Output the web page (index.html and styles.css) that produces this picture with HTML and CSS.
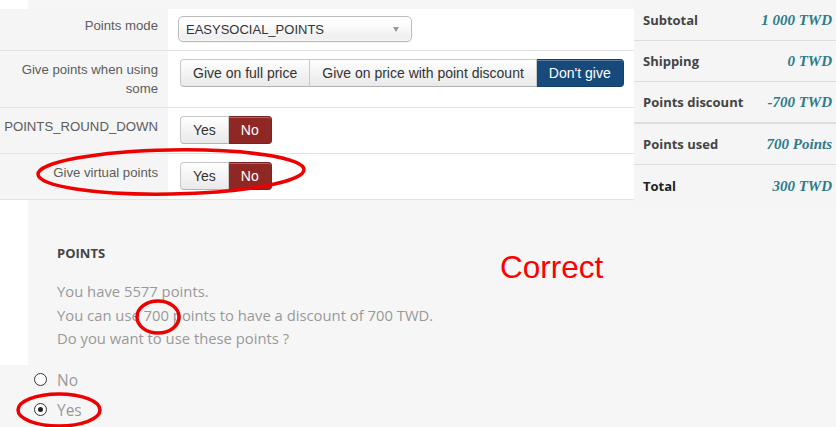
FILE: index.html
```
<!DOCTYPE html>
<html>
<head>
<meta charset="utf-8">
<link rel="stylesheet" href="styles.css">
</head>
<body>
<div class="page">
  <div class="upper">
    <div class="left">
      <div class="band"><div class="white-corner"></div></div>
      <div class="form">
        <div class="frow first">
          <div class="flabel">Points mode</div>
          <div class="fctrl">
            <div class="select"><span>EASYSOCIAL_POINTS</span><i class="caret"></i></div>
          </div>
        </div>
        <div class="frow">
          <div class="flabel">Give points when using some</div>
          <div class="fctrl">
            <div class="btn-group">
              <span class="btn">Give on full price</span>
              <span class="btn">Give on price with point discount</span>
              <span class="btn primary">Don't give</span>
            </div>
          </div>
        </div>
        <div class="frow">
          <div class="flabel">POINTS_ROUND_DOWN</div>
          <div class="fctrl">
            <div class="btn-group">
              <span class="btn">Yes</span>
              <span class="btn danger">No</span>
            </div>
          </div>
        </div>
        <div class="frow">
          <div class="flabel">Give virtual points</div>
          <div class="fctrl">
            <div class="btn-group">
              <span class="btn">Yes</span>
              <span class="btn danger">No</span>
            </div>
          </div>
        </div>
      </div>
      <div class="band fill"><div class="white-corner"></div></div>
    </div>
    <div class="summary">
      <div class="srow"><span class="slabel">Subtotal</span><span class="sval">1 000 TWD</span></div>
      <div class="srow"><span class="slabel">Shipping</span><span class="sval">0 TWD</span></div>
      <div class="srow thick"><span class="slabel">Points discount</span><span class="sval">-700 TWD</span></div>
      <div class="srow"><span class="slabel">Points used</span><span class="sval">700 Points</span></div>
      <div class="srow last"><span class="slabel total">Total</span><span class="sval">300 TWD</span></div>
    </div>
  </div>
  <div class="lower">
    <div class="lower-main">
      <div class="strip"></div>
      <div class="points">
        <h3 class="points-title">POINTS</h3>
        <p class="points-text">You have 5577 points.<br>You can use 700 points to have a discount of 700 TWD.<br>Do you want to use these points ?</p>
      </div>
    </div>
    <div class="choices">
      <label class="radio"><span class="circle"></span>No</label>
      <label class="radio"><span class="circle checked"></span>Yes</label>
    </div>
  </div>
  <div class="note">Correct</div>
  <svg class="marks" width="836" height="427" viewBox="0 0 836 427">
    <ellipse cx="171" cy="172" rx="133" ry="22" transform="rotate(-1 171 172)"/>
    <ellipse cx="158" cy="317" rx="21" ry="16"/>
    <ellipse cx="59" cy="410" rx="41" ry="16"/>
  </svg>
</div>
</body>
</html>
```
FILE: styles.css
```
html, body {
  margin: 0;
  padding: 0;
}
body {
  background: #f6f6f6;
  width: 836px;
  height: 427px;
  overflow: hidden;
}
.page {
  position: relative;
  width: 836px;
  height: 427px;
  display: flex;
  flex-direction: column;
}
.upper {
  display: flex;
}
.left {
  width: 634px;
  display: flex;
  flex-direction: column;
}
.band {
  height: 9px;
  display: flex;
}
.band.fill {
  flex: 1;
}
.white-corner {
  width: 28px;
  background: #fff;
}
.form {
  background: #fff;
  font-family: "Liberation Sans", Arial, sans-serif;
}
.frow {
  display: grid;
  grid-template-columns: 168px 1fr;
  border-bottom: 1px solid #e2e2e2;
}
.flabel {
  background: #f5f5f5;
  text-align: right;
  padding: 9px 10px 9px 0;
  font-size: 13.2px;
  line-height: 19px;
  color: #5c5c5c;
}
.fctrl {
  padding: 8px 0 9px 12px;
}
.frow.first .flabel {
  padding-top: 7px;
  padding-bottom: 8px;
}
.frow.first .fctrl {
  padding: 7px 0 8px 10px;
}
.select {
  height: 24px;
  border: 1px solid #bbb;
  border-radius: 5px;
  background: linear-gradient(#fff 20%, #f0f0f0 80%);
  box-shadow: inset 0 0 3px #fff, 0 1px 1px rgba(0,0,0,0.06);
  display: flex;
  align-items: center;
  justify-content: space-between;
  padding: 0 12px 0 7px;
  box-sizing: content-box;
  width: 213px;
  font-size: 13px;
  color: #333;
}
.caret {
  width: 0;
  height: 0;
  border-left: 3px solid transparent;
  border-right: 3px solid transparent;
  border-top: 5px solid #999;
}
.btn-group {
  display: inline-flex;
}
.btn {
  font-size: 14px;
  line-height: 20px;
  padding: 3px 12px;
  color: #333;
  background: linear-gradient(#fff, #e9e9e9);
  border: 1px solid #c8c8c8;
  border-bottom-color: #b3b3b3;
  border-left-width: 0;
  box-shadow: inset 0 1px 0 rgba(255,255,255,0.3);
}
.btn:first-child {
  border-left-width: 1px;
  border-radius: 4px 0 0 4px;
}
.btn:last-child {
  border-radius: 0 4px 4px 0;
}
.btn.primary {
  background: #174a7b;
  border-color: #13406b;
  color: #fff;
}
.btn.danger {
  background: #8f2824;
  border-color: #7d211e;
  color: #fff;
}
.summary {
  flex: 1;
  background: #f5f5f5;
  font-family: "Open Sans", sans-serif;
}
.srow {
  height: 40px;
  border-bottom: 1px solid #dedede;
  display: flex;
  align-items: center;
  justify-content: space-between;
  padding: 0 4px 0 9px;
}
.srow.thick {
  border-bottom-width: 2px;
}
.srow.last {
  border-bottom: 0;
  height: 42px;
}
.slabel {
  font-size: 13px;
  font-weight: 700;
  color: #444;
}
.slabel.total {
  color: #222;
}
.sval {
  font-family: "Liberation Serif", "Times New Roman", serif;
  font-style: italic;
  font-weight: 700;
  font-size: 15px;
  color: #2c7b8a;
}
.lower {
  display: flex;
  flex-direction: column;
  font-family: "Open Sans", sans-serif;
}
.lower-main {
  display: flex;
}
.strip {
  width: 28px;
  background: #fff;
}
.points {
  padding: 38px 0 14px 29px;
}
.points-title {
  margin: 0 0 19px;
  font-size: 13px;
  line-height: 16px;
  font-weight: 700;
  color: #444;
}
.points-text {
  margin: 0;
  font-size: 14.8px;
  line-height: 23.5px;
  color: #999;
  font-weight: 400;
}
.choices {
  display: flex;
  flex-direction: column;
  padding-left: 34px;
}
.radio {
  display: flex;
  align-items: center;
  height: 30px;
  gap: 10px;
  font-size: 15.5px;
  color: #999;
}
.circle {
  width: 11px;
  height: 11px;
  border: 1px solid #333;
  border-radius: 50%;
  background: #fff;
  position: relative;
}
.circle.checked::after {
  content: "";
  position: absolute;
  left: 3px;
  top: 3px;
  width: 5px;
  height: 5px;
  border-radius: 50%;
  background: #222;
}
.note {
  position: absolute;
  left: 500px;
  top: 249px;
  font-family: "Liberation Sans", Arial, sans-serif;
  font-size: 31.5px;
  line-height: 36px;
  color: #f00;
}
.marks {
  position: absolute;
  left: 0;
  top: 0;
  pointer-events: none;
}
.marks ellipse {
  fill: none;
  stroke: #ee0000;
  stroke-width: 3.5;
}
```
